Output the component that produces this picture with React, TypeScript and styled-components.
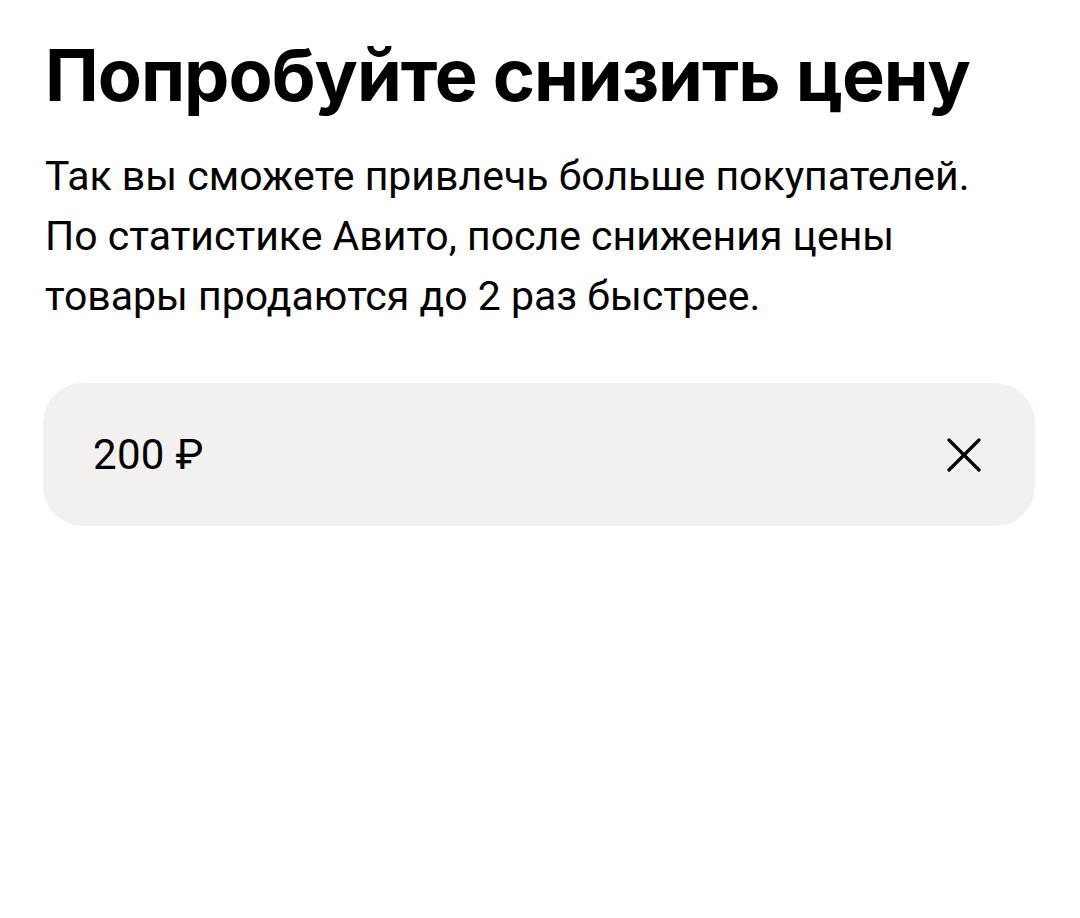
import React from "react";
import styled, { createGlobalStyle } from "styled-components";

const GlobalStyle = createGlobalStyle`
 html, body {
  margin: 0;
  padding: 0;
  background: #ffffff;
 }
 body {
  font-family: Inter, "Noto Sans", "Liberation Sans", sans-serif;
  color: #000000;
 }
`;

const Page = styled.main`
 display: flex;
 flex-direction: column;
 padding: 33px 45px 0 43px;
 width: 1080px;
 box-sizing: border-box;
`;

const Title = styled.h1`
 margin: 0 0 0 2px;
 font-size: 72px;
 line-height: 84px;
 font-weight: 700;
 letter-spacing: -1px;
`;

const Lead = styled.p`
 margin: 29px 0 0 2px;
 font-family: Roboto, "Liberation Sans", sans-serif;
 font-size: 41px;
 line-height: 60px;
 font-weight: 400;
 letter-spacing: 0;
 color: #000000;
`;

const Field = styled.div`
 margin-top: 57px;
 height: 143px;
 width: 992px;
 display: flex;
 align-items: center;
 justify-content: space-between;
 padding: 0 54px 0 50px;
 box-sizing: border-box;
 background: #f2f1f0;
 border-radius: 40px;
`;

const Value = styled.span`
 font-family: Roboto, "Liberation Sans", sans-serif;
 font-size: 42px;
 font-weight: 400;
 letter-spacing: 0.3px;
`;

const ClearButton = styled.button`
 border: 0;
 background: transparent;
 padding: 0;
 width: 34px;
 height: 34px;
 display: flex;
 align-items: center;
 justify-content: center;
 cursor: pointer;
`;

const App: React.FC = () => (
 <>
  <GlobalStyle />
  <Page>
   <Title>Попробуйте снизить цену</Title>
   <Lead>
    Так вы сможете привлечь больше покупателей.
    <br />
    По статистике Авито, после снижения цены
    <br />
    товары продаются до 2 раз быстрее.
   </Lead>
   <Field>
    <Value>200 ₽</Value>
    <ClearButton aria-label="Очистить">
     <svg width="34" height="34" viewBox="0 0 34 34" fill="none">
      <path
       d="M2 2L32 32M32 2L2 32"
       stroke="#000"
       strokeWidth="3.2"
       strokeLinecap="round"
      />
     </svg>
    </ClearButton>
   </Field>
  </Page>
 </>
);

export default App;
